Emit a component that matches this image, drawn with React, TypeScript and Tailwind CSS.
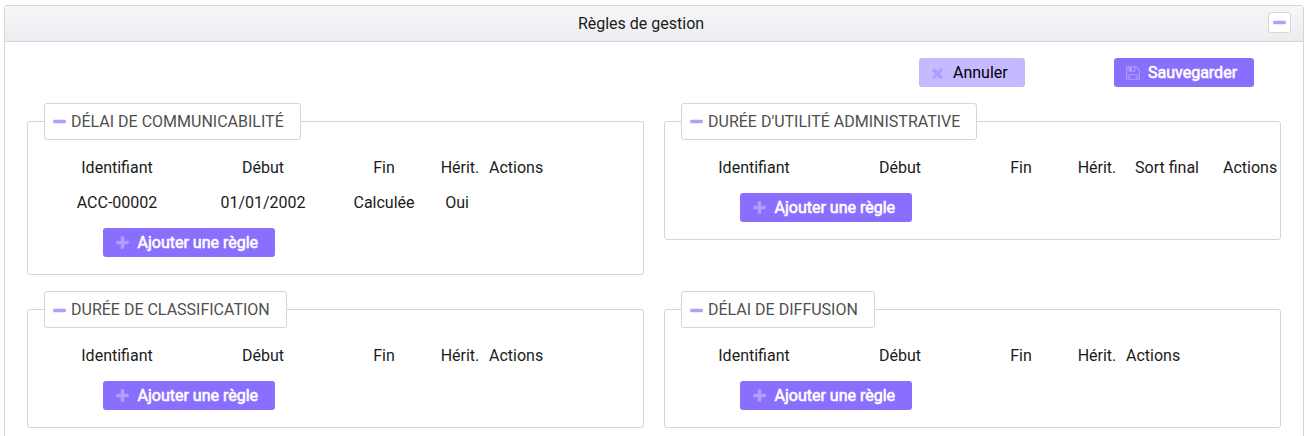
import React from "react";

const glyphs = {
  minus: {
    box: "192 0 1408 1792",
    d: "M1600 736v192q0 40-28 68t-68 28h-1216q-40 0-68-28t-28-68v-192q0-40 28-68t68-28h1216q40 0 68 28t28 68z",
  },
  plus: {
    box: "192 0 1408 1792",
    d: "M1600 736v192q0 40-28 68t-68 28h-416v416q0 40-28 68t-68 28h-192q-40 0-68-28t-28-68v-416h-416q-40 0-68-28t-28-68v-192q0-40 28-68t68-28h416v-416q0-40 28-68t68-28h192q40 0 68 28t28 68v416h416q40 0 68 28t28 68z",
  },
  times: {
    box: "192 0 1408 1792",
    d: "M1490 1322q0 40-28 68l-136 136q-28 28-68 28t-68-28l-294-294-294 294q-28 28-68 28t-68-28l-136-136q-28-28-28-68t28-68l294-294-294-294q-28-28-28-68t28-68l136-136q28-28 68-28t68 28l294 294 294-294q28-28 68-28t68 28l136 136q28 28 28 68t-28 68l-294 294 294 294q28 28 28 68z",
  },
  save: {
    box: "128 0 1536 1792",
    d: "M512 1536h768v-384h-768v384zm896 0h128v-896q0-14-10-38.5t-20-34.5l-281-281q-10-10-34-20t-39-10v416q0 40-28 68t-68 28h-576q-40 0-68-28t-28-68v-416h-128v1280h128v-416q0-40 28-68t68-28h832q40 0 68 28t28 68v416zm-384-928v-320q0-13-9.5-22.5t-22.5-9.5h-192q-13 0-22.5 9.5t-9.5 22.5v320q0 13 9.5 22.5t22.5 9.5h192q13 0 22.5-9.5t9.5-22.5zm640 32v928q0 40-28 68t-68 28h-1344q-40 0-68-28t-28-68v-1344q0-40 28-68t68-28h928q40 0 88 20t76 48l280 280q28 28 48 76t20 88z",
  },
};

function Icon({ name, className }: { name: keyof typeof glyphs; className: string }) {
  return (
    <svg viewBox={glyphs[name].box} fill="currentColor" className={`shrink-0 text-[#ad9fff] ${className}`} aria-hidden="true">
      <path d={glyphs[name].d} />
    </svg>
  );
}

type Rule = { id: string; start: string; end: string; inherited: string };

type RuleSetProps = {
  title: string;
  rules?: Rule[];
  finalFate?: boolean;
  iconClass?: string;
};

function RuleSet({ title, rules = [], finalFate = false, iconClass = "" }: RuleSetProps) {
  const columns = finalFate
    ? "grid grid-cols-[146px_146px_96px_50px_92px_86px]"
    : "grid grid-cols-[146px_146px_96px_50px_90px]";
  return (
    <section className="mt-[18px] rounded-[3px] border border-[#d5d5d5] pb-[17px] pl-4">
      <h2 className="relative -mt-[19px] flex h-[37px] w-fit items-center rounded-[3px] border border-[#d5d5d5] bg-white pr-4 pl-2 text-[#4f4f4f]">
        <Icon name="minus" className={`mr-[5px] h-4 w-[13px] ${iconClass}`} />
        {title}
      </h2>
      <div className={`${columns} mt-[10px] h-[35px] items-center text-center whitespace-nowrap`}>
        <span>Identifiant</span>
        <span>Début</span>
        <span>Fin</span>
        <span className="pl-[6px]">Hérit.</span>
        {finalFate && <span className="pl-1">Sort final</span>}
        <span className={finalFate ? "pl-[12px] text-left" : "pl-[7px] text-left"}>Actions</span>
      </div>
      {rules.map((r) => (
        <div key={r.id} className={`${columns} h-[35px] items-center text-center`}>
          <span>{r.id}</span>
          <span>{r.start}</span>
          <span>{r.end}</span>
          <span>{r.inherited}</span>
        </div>
      ))}
      <button className="mt-[8px] ml-[59px] flex h-[29px] w-[172px] items-center rounded-[3px] bg-[#8a6fff] pl-[13px] whitespace-nowrap text-white [-webkit-text-stroke:0.6px_white]">
        <Icon name="plus" className="mr-[8.5px] h-4 w-[13px]" />
        Ajouter une règle
      </button>
    </section>
  );
}

export default function App() {
  return (
    <div className="h-[436px] overflow-hidden bg-white pt-[5px] pr-[10px] pl-1 font-[Roboto,sans-serif] text-base leading-6 text-[#1b1b1b]">
      <main className="h-[460px] rounded-t-[3px] border border-[#d5d5d5]">
        <header className="flex h-9 items-center border-b border-[#d5d5d5] bg-linear-to-b from-[#f6f7f9] to-[#ebedf0] pr-3">
          <h1 className="flex-1 pl-[9px] text-center">Règles de gestion</h1>
          <button className="-mt-[2px] flex h-[21px] w-[23px] items-center justify-center rounded-[3px] border border-[#d5d5d5] bg-white" aria-label="Réduire">
            <Icon name="minus" className="h-4 w-[13px]" />
          </button>
        </header>
        <div className="mt-4 mr-[49px] flex justify-end gap-[89px]">
          <button className="flex h-[29px] w-[106px] items-center rounded-[3px] bg-[#c5b9ff] pl-3 text-black">
            <Icon name="times" className="mr-[9px] h-4 w-[13px]" />
            Annuler
          </button>
          <button className="flex h-[29px] w-[140px] items-center rounded-[3px] bg-[#8a6fff] pl-3 text-white [-webkit-text-stroke:0.6px_white]">
            <Icon name="save" className="mr-[8px] h-4 w-[14px]" />
            Sauvegarder
          </button>
        </div>
        <div className="mt-4 ml-[22px] grid grid-cols-[617px_617px] items-start gap-x-5 gap-y-4">
          <RuleSet
            title="DÉLAI DE COMMUNICABILITÉ"
            rules={[{ id: "ACC-00002", start: "01/01/2002", end: "Calculée", inherited: "Oui" }]}
          />
          <RuleSet title="DURÉE D'UTILITÉ ADMINISTRATIVE" finalFate />
          <RuleSet title="DURÉE DE CLASSIFICATION" iconClass="mt-[2px]" />
          <RuleSet title="DÉLAI DE DIFFUSION" iconClass="mt-[2px]" />
        </div>
      </main>
    </div>
  );
}
